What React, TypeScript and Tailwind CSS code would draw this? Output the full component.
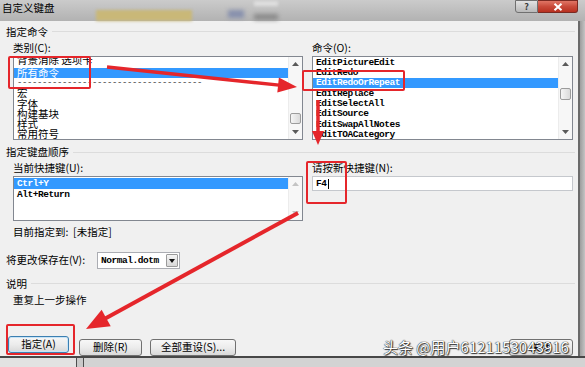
import React from "react";

const mono = "font-['Liberation_Mono','Noto_Sans_CJK_SC',monospace] text-[9.5px] tracking-[-0.45px] font-bold leading-none";

function Tri({ up, disabled }: { up?: boolean; disabled?: boolean }) {
  const c = disabled ? "#c4c4c4" : "#5a5a5a";
  return (
    <svg width="7" height="4" viewBox="0 0 7 4">
      <path d={up ? "M0 4 L3.5 0 L7 4Z" : "M0 0 L3.5 4 L7 0Z"} fill={c} />
    </svg>
  );
}

function ScrollBar({ thumb, disabled }: { thumb?: string; disabled?: boolean }) {
  return (
    <div className="flex w-[14px] flex-col border-l border-[#ececec] bg-[#f7f7f7]">
      <div className="flex h-[14px] items-center justify-center">
        <Tri up disabled={disabled} />
      </div>
      <div className="flex-1">
        {thumb && (
          <div className={`${thumb} mx-[1px] rounded-[2px] border border-[#9c9c9c] bg-gradient-to-r from-[#f5f5f5] to-[#dadada]`} />
        )}
      </div>
      <div className="flex h-[14px] items-center justify-center">
        <Tri disabled={disabled} />
      </div>
    </div>
  );
}

function Row({ children, sel, h = "h-[10.3px]" }: { children: React.ReactNode; sel?: boolean; h?: string }) {
  return (
    <div className={`${h} flex shrink-0 items-center px-[3px] ${sel ? "bg-[#3399ff] text-white" : "text-black"}`}>
      {children}
    </div>
  );
}

function GroupHead({ label, mt }: { label: string; mt: string }) {
  return (
    <div className={`${mt} flex h-[14px] items-center pl-[6px] pr-[3px]`}>
      <span className="text-[10.5px] leading-none text-black">{label}</span>
      <div className="ml-[4px] h-px flex-1 bg-[#dcdcdc]" />
    </div>
  );
}

function Btn({ label, w, primary }: { label: string; w: string; primary?: boolean }) {
  return (
    <button
      className={`${w} h-[17px] rounded-[3px] border bg-gradient-to-b from-[#f7f7f7] via-[#ececec] to-[#d9d9d9] text-[10.5px] leading-none text-black ${
        primary ? "border-[#3c7fb1] shadow-[inset_0_0_0_1px_#c7e4f7]" : "border-[#707070]"
      }`}
    >
      {label}
    </button>
  );
}

function RedBox({ cls }: { cls: string }) {
  return <div className={`${cls} pointer-events-none absolute rounded-[2px] border-[2.5px] border-[#e5262b]`} />;
}

function arrow(x1: number, y1: number, x2: number, y2: number, head: number, half: number) {
  const len = Math.hypot(x2 - x1, y2 - y1);
  const ux = (x2 - x1) / len;
  const uy = (y2 - y1) / len;
  const bx = x2 - ux * head;
  const by = y2 - uy * head;
  const px = -uy;
  const py = ux;
  return {
    line: { x1, y1, x2: bx + ux, y2: by + uy },
    head: `${x2},${y2} ${bx + px * half},${by + py * half} ${bx - px * half},${by - py * half}`,
  };
}

export default function App() {
  const arrows = [
    arrow(107, 67, 297, 87, 19, 7.5),
    arrow(318, 100, 318, 145, 14, 6),
    arrow(298, 213, 86, 329, 23, 9.5),
  ];

  return (
    <div className="relative h-[367px] w-[585px] overflow-hidden bg-[#b6b6b6] font-['Noto_Sans_CJK_SC','Noto_Sans',sans-serif]">
      {/* title bar, blurred window behind */}
      <div className="flex h-[21px] bg-gradient-to-b from-[#cbcbcb] to-[#b2b2b2]">
        <div className="flex w-[96px] items-start pl-[2px] pt-[3px]">
          <span className="text-[10.5px] leading-none text-black">自定义键盘</span>
        </div>
        <div className="flex w-[96px] flex-col">
          <div className="h-[10px]" />
          <div className="flex-1 bg-[#c9b878] blur-[1.5px]" />
        </div>
        <div className="w-[36px]" />
        <div className="flex w-[16px] flex-col">
          <div className="h-[10px]" />
          <div className="h-[8px] bg-[#8790ad] blur-[2px]" />
        </div>
        <div className="ml-[10px] flex w-[24px] flex-col justify-between py-[1px]">
          <div className="h-[5px] bg-[#dedede] blur-[1.5px]" />
          <div className="h-[6px] bg-[#8a8a8a] blur-[2px]" />
        </div>
        <div className="ml-auto flex h-[13px]">
          <div className="flex w-[23px] items-center justify-center rounded-bl-[3px] border border-[#707070] bg-gradient-to-b from-[#e2e2e2] to-[#b9b9b9] text-[9px] font-bold leading-none text-[#3b3b3b]">
            ?
          </div>
          <div className="flex w-[40px] items-center justify-center rounded-br-[3px] border border-l-0 border-[#7a2a22] bg-gradient-to-b from-[#e07565] via-[#c94a3a] to-[#b8301f]">
            <svg width="10" height="8" viewBox="0 0 10 8">
              <path d="M1.5 0.8 L8.5 7.2 M8.5 0.8 L1.5 7.2" stroke="#fff" strokeWidth="2" />
            </svg>
          </div>
        </div>
        <div className="w-[7px]" />
      </div>

      <div className="flex h-[335px]">
        <div className="flex w-[578px] flex-col bg-[#f0f0f0]">
          <GroupHead label="指定命令" mt="mt-[4px]" />

          <div className="mt-[3px] flex gap-[9px] pl-[13px]">
            <div className="flex w-[290px] flex-col">
              <div className="flex h-[14px] items-center text-[10.5px] leading-none">类别(C):</div>
              <div className="flex h-[84px] border border-[#828790] bg-white">
                <div className="flex flex-1 flex-col overflow-hidden pt-px text-[10.5px] leading-none">
                  <Row>
                    <span className="-mt-[4px]">背景消除 选项卡</span>
                  </Row>
                  <Row sel>所有命令</Row>
                  <Row>
                    <span className="font-['Liberation_Mono',monospace] text-[9px] leading-none tracking-[-0.4px] text-[#444]">
                      -------------------------------------
                    </span>
                  </Row>
                  <Row>宏</Row>
                  <Row>字体</Row>
                  <Row>构建基块</Row>
                  <Row>样式</Row>
                  <Row>常用符号</Row>
                </div>
                <ScrollBar thumb="mt-[42px] h-[11px]" />
              </div>
            </div>
            <div className="flex w-[261px] flex-col">
              <div className="flex h-[14px] items-center text-[10.5px] leading-none">命令(O):</div>
              <div className="flex h-[84px] border border-[#828790] bg-white">
                <div className={`flex flex-1 flex-col overflow-hidden pt-px ${mono}`}>
                  <Row>EditPictureEdit</Row>
                  <Row>EditRedo</Row>
                  <Row sel>EditRedoOrRepeat</Row>
                  <Row>EditReplace</Row>
                  <Row>EditSelectAll</Row>
                  <Row>EditSource</Row>
                  <Row>EditSwapAllNotes</Row>
                  <Row>EditTOACategory</Row>
                </div>
                <ScrollBar thumb="mt-[17px] h-[12px]" />
              </div>
            </div>
          </div>

          <GroupHead label="指定键盘顺序" mt="mt-[6px]" />

          <div className="mt-[2px] flex gap-[9px] pl-[13px]">
            <div className="flex w-[290px] flex-col">
              <div className="flex h-[15px] items-center text-[10.5px] leading-none">当前快捷键(U):</div>
              <div className="flex h-[45px] border border-[#828790] bg-white">
                <div className={`flex flex-1 flex-col overflow-hidden pt-px ${mono}`}>
                  <Row sel h="h-[11px]">Ctrl+Y</Row>
                  <Row h="h-[11px]">Alt+Return</Row>
                </div>
                <ScrollBar disabled />
              </div>
              <div className="mt-[4px] flex h-[14px] items-center text-[10.5px] leading-none">
                目前指定到:&nbsp;&nbsp;[未指定]
              </div>
            </div>
            <div className="flex w-[261px] flex-col">
              <div className="flex h-[15px] items-center text-[10.5px] leading-none">请按新快捷键(N):</div>
              <div className={`flex h-[15px] items-center border border-[#c5c8cd] bg-white px-[3px] ${mono}`}>
                F4
                <span className="ml-px h-[10px] w-px bg-black" />
              </div>
            </div>
          </div>

          <div className="mt-[13px] flex h-[17px] items-center pl-[6px]">
            <span className="w-[91px] text-[10.5px] leading-none">将更改保存在(V):</span>
            <div className="flex h-[17px] w-[83px] items-center border border-[#abadb3] bg-white pl-[3px] pr-px">
              <span className={`flex-1 ${mono}`}>Normal.dotm</span>
              <div className="flex h-[13px] w-[12px] items-center justify-center rounded-[1px] border border-[#9a9a9a] bg-gradient-to-b from-[#f4f4f4] to-[#d8d8d8]">
                <svg width="6" height="4" viewBox="0 0 6 4">
                  <path d="M0 0 L3 4 L6 0Z" fill="#111" />
                </svg>
              </div>
            </div>
          </div>

          <GroupHead label="说明" mt="mt-[8px]" />
          <div className="mt-[3px] flex h-[14px] items-center pl-[13px] text-[10.5px] leading-none">重复上一步操作</div>

          <div className="mt-[25px] flex items-center pl-[8px] pr-[5px]">
            <Btn label="指定(A)" w="w-[61px]" primary />
            <div className="ml-[10px]">
              <Btn label="删除(R)" w="w-[63px]" />
            </div>
            <div className="ml-[8px]">
              <Btn label="全部重设(S)..." w="w-[86px]" />
            </div>
            <div className="ml-auto">
              <Btn label="关闭" w="w-[64px]" />
            </div>
          </div>
        </div>
        <div className="w-[7px] border-l-[2px] border-[#6a6a6a] bg-gradient-to-r from-[#9d9d9d] to-[#c4c4c4]" />
      </div>

      <div className="flex h-[11px] border-t-[2px] border-[#474747] bg-[#d3d3d3]">
        <div className="w-[76px] bg-[#e2e2e2]" />
        <div className="w-px bg-[#4d4d4d]" />
        <div className="w-[6px] bg-[#c9c9c9]" />
        <div className="w-px bg-[#4d4d4d]" />
      </div>

      {/* red annotations */}
      <RedBox cls="left-[8px] top-[56px] h-[33px] w-[83px]" />
      <RedBox cls="left-[302px] top-[70px] h-[21px] w-[103px]" />
      <RedBox cls="left-[306px] top-[161px] h-[43px] w-[41px]" />
      <RedBox cls="left-[6px] top-[324px] h-[31px] w-[69px]" />
      <svg className="pointer-events-none absolute left-0 top-0" width="585" height="367">
        {arrows.map((a, i) => (
          <g key={i}>
            <line {...a.line} stroke="#e5262b" strokeWidth={i === 2 ? 4 : 3.5} />
            <polygon points={a.head} fill="#e5262b" />
          </g>
        ))}
      </svg>

      {/* watermark */}
      <div className="absolute left-[383px] top-[339px] whitespace-nowrap text-[15px] leading-none text-white [text-shadow:0_0_1px_#222,0_0_1px_#222,1px_1px_1px_#333]">
        头条 @用户6121153043916
      </div>
    </div>
  );
}
